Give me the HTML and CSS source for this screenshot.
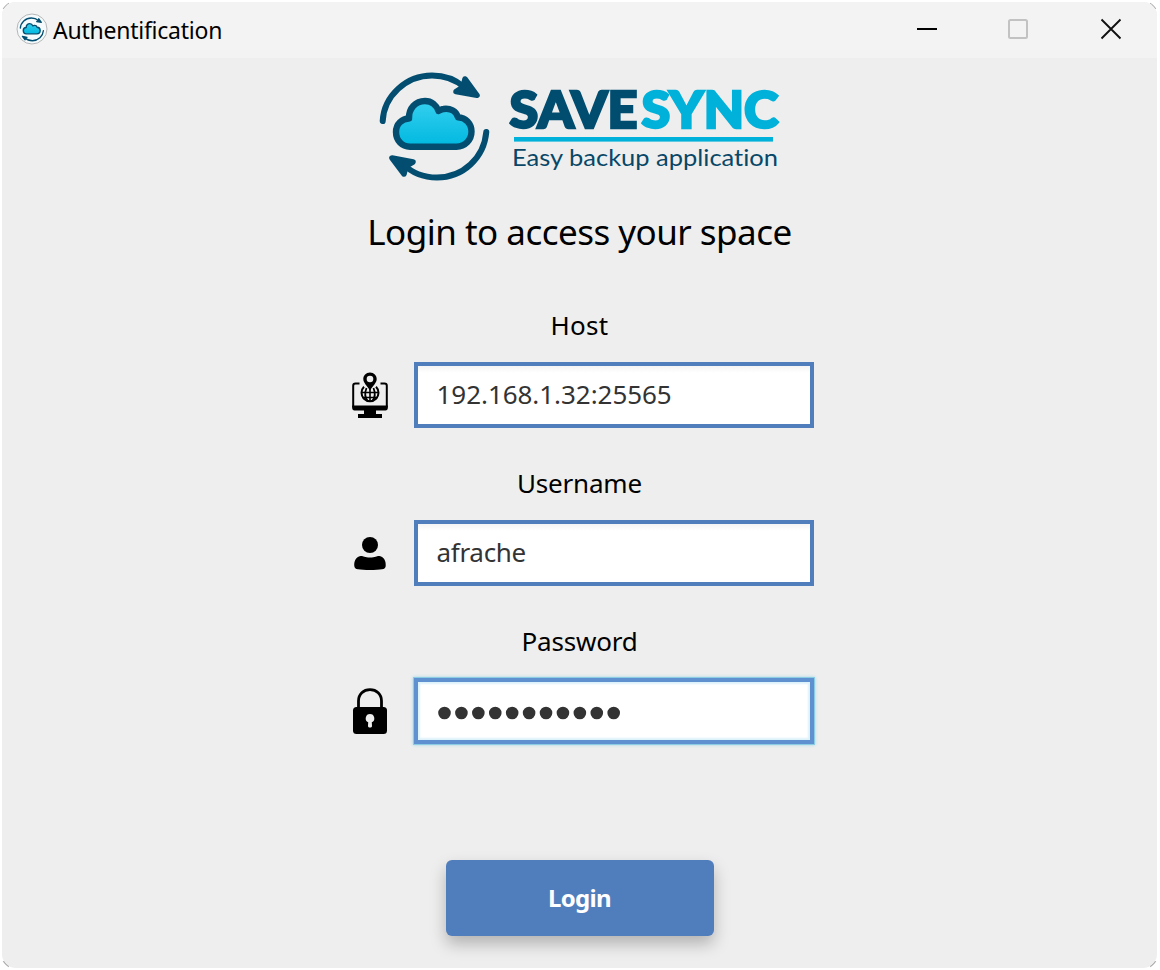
FILE: index.html
```html
<!DOCTYPE html>
<html lang="en">
<head>
<meta charset="utf-8">
<title>Authentification</title>
<link rel="stylesheet" href="styles.css">
</head>
<body>
<svg class="defs" width="0" height="0" aria-hidden="true">
  <defs>
    <linearGradient id="sky" x1="0" y1="0" x2="0" y2="1"><stop offset="0" stop-color="#35cfee"/><stop offset="1" stop-color="#00b8e0"/></linearGradient>
    <symbol id="mark" viewBox="0 0 130 130">
      <g fill="none" stroke="#034e70" stroke-linecap="round" stroke-linejoin="round">
        <path stroke-width="6" d="M12.700 61C14 36 36 15.500 62 15.500C75 15.500 86 20 94 27"/>
        <path stroke-width="6" d="M116.300 72C114 98 93 117.500 67 117.500C54 117.500 42 113 33 104"/>
        <path fill="#034e70" stroke-width="5.500" d="M95 19L107 35.300L86 31.500L93 27Z"/>
        <path fill="#034e70" stroke-width="5.500" d="M22 98L43 102L36 106L34 114Z"/>
        <path fill="url(#sky)" stroke-width="6.400" d="M40 86.700H86.500C95 86.700 101.500 80 101.500 71.500C101.500 63.500 95.500 57.500 88 57.300C86 51 80 48 73.500 49C71 49.300 70 50.500 68.500 51C66.500 45 61.500 41 55 41C45.500 41 38.500 48.500 39 58.500C32 58.500 26 64 26 72C26 80.500 32 86.700 40 86.700Z"/>
      </g>
    </symbol>
  </defs>
</svg>
<div class="window">
  <header class="titlebar">
    <svg class="app-icon" viewBox="0 0 32 32"><circle cx="16" cy="16" r="15" fill="#f5fbfd" stroke="#b5b5b5"/><use href="#mark" x="1.500" y="1.500" width="29" height="29"/></svg>
    <span class="title">Authentification</span>
    <div class="controls">
      <svg viewBox="0 0 22 22"><path d="M1 11H21" stroke="#000" stroke-width="2"/></svg>
      <svg viewBox="0 0 22 22"><rect x="1" y="2" width="18" height="18" rx="1.500" fill="none" stroke="#c2c2c2" stroke-width="2"/></svg>
      <svg viewBox="0 0 22 22"><path d="M1.500 1.500L20.500 20.500M20.500 1.500L1.500 20.500" stroke="#111" stroke-width="1.900"/></svg>
    </div>
  </header>
  <main class="content">
    <svg class="logo" viewBox="370 60 420 130">
      <use href="#mark" x="370" y="60" width="130" height="130"/>
      <text class="brand brand-dark" x="509.500" y="128.200" textLength="128" lengthAdjust="spacingAndGlyphs">SAVE</text>
      <text class="brand brand-light" x="641.500" y="128.200" textLength="137" lengthAdjust="spacingAndGlyphs">SYNC</text>
      <rect x="514" y="137" width="259" height="4.600" fill="#00b1da"/>
      <text class="tagline" x="512" y="166" textLength="266" lengthAdjust="spacingAndGlyphs">Easy backup application</text>
    </svg>
    <h1>Login to access your space</h1>
    <form class="form">
      <div class="field">
        <label class="host">Host</label>
        <div class="row">
          <svg class="icon" viewBox="0 0 40 50">
            <path d="M9.500 12.500H5.500C4 12.500 3.200 13.300 3.200 14.800V36.500M30.500 12.500H34.500C36 12.500 36.800 13.300 36.800 14.800V36.500" fill="none" stroke="#000" stroke-width="2"/>
            <path d="M2.200 34.500H37.800V37C37.800 38.500 37 39.500 35.500 39.500H26V43H32V47H8V43H14V39.500H4.500C3 39.500 2.200 38.500 2.200 37Z"/>
            <g fill="none" stroke="#000" stroke-width="2"><path d="M14 15.800A8.500 8.500 0 1 0 26 15.800"/><path d="M16.500 17C14.500 22 15 27 18 30.500M23.500 17C25.500 22 25 27 22 30.500" stroke-width="1.800"/><path d="M20 18V31M11 21.500H29M12 26.500H28" stroke-width="1.600"/></g>
            <path d="M20 1.500C16 1.500 13.300 4.500 13.300 8C13.300 12 17 14.500 20 19.500C23 14.500 26.700 12 26.700 8C26.700 4.500 24 1.500 20 1.500Z"/>
            <circle cx="20" cy="8" r="3.300" fill="#eee"/>
          </svg>
          <input class="input" type="text" value="192.168.1.32:25565">
        </div>
      </div>
      <div class="field">
        <label>Username</label>
        <div class="row">
          <svg class="icon" viewBox="0 0 40 50"><circle cx="20" cy="16" r="8"/><path d="M4.300 37C3.800 32 6 28 10.500 27C13 26.500 14 28.500 20 28.500C26 28.500 27 26.500 29.500 27C34 28 36.200 32 35.700 37C35.500 39 34.500 40 32 40.300C27 41.200 13 41.200 8 40.300C5.500 40 4.500 39 4.300 37Z"/></svg>
          <input class="input name" type="text" value="afrache">
        </div>
      </div>
      <div class="field">
        <label>Password</label>
        <div class="row">
          <svg class="icon" viewBox="0 0 40 50"><path d="M8.500 24V14C8.500 7 13.500 2.700 20 2.700S31.500 7 31.500 14V24" fill="none" stroke="#000" stroke-width="2.800"/><rect x="3" y="20" width="34" height="27" rx="3.500"/><path fill="#eee" d="M20 27A4.300 4.300 0 0 0 18.200 35.200L18 39C18 41 22 41 22 39L21.800 35.200A4.300 4.300 0 0 0 20 27Z"/></svg>
          <div class="input focused"><svg width="186" height="14" viewBox="0 0 186 14"><path d="M7.500 7H177.500" stroke="#333" stroke-width="12.600" stroke-linecap="round" stroke-dasharray="0 16.920"/></svg></div>
        </div>
      </div>
      <button class="login" type="button">Login</button>
    </form>
  </main>
</div>
</body>
</html>
```
FILE: styles.css
```css
* { box-sizing: border-box; }
body {
  margin: 0; padding: 2px 3px 2px 2px; height: 970px; overflow: hidden;
  font-family: "Noto Sans", "Open Sans", sans-serif; color: #000;
  background:
    radial-gradient(circle at 16px 16px, #888 14px, #fff 15.500px) 0 0 / 9px 9px no-repeat,
    radial-gradient(circle at -7px 16px, #888 14px, #fff 15.500px) 1150px 0 / 10px 9px no-repeat,
    radial-gradient(circle at 16px -7px, #888 14px, #fff 15.500px) 0 961px / 9px 9px no-repeat,
    radial-gradient(circle at -7px -7px, #888 14px, #fff 15.500px) 1150px 961px / 10px 9px no-repeat,
    #fff;
}
.defs { position: absolute; }
.window { height: 966px; background: #eee; border-radius: 14px; overflow: hidden; }
.titlebar { height: 56px; background: #f3f3f3; display: flex; align-items: center; padding: 0 35px 2px 14px; }
.app-icon { width: 32px; height: 32px; }
.title { font-size: 23px; line-height: 34px; margin-left: 5px; padding-top: 2px; letter-spacing: -0.24px; }
.controls { margin-left: auto; display: flex; gap: 70px; }
.controls svg { width: 22px; height: 22px; }
.content { display: flex; flex-direction: column; align-items: center; padding-top: 2px; }
.logo { width: 420px; height: 130px; display: block; }
.brand { font: 900 51px Lato, sans-serif; stroke-width: 2.500px; }
.brand-dark { fill: #004d70; stroke: #004d70; }
.brand-light { fill: #00b1da; stroke: #00b1da; }
.tagline { font: 400 23.500px Lato, sans-serif; font-variant-ligatures: none; fill: #084767; }
h1 { margin: 17px 0 0; font-size: 35px; line-height: 50px; font-weight: 400; white-space: nowrap; letter-spacing: -0.52px; }
.form { display: flex; flex-direction: column; align-items: center; padding-top: 50px; }
.field { height: 158px; display: flex; flex-direction: column; align-items: center; }
label { font-size: 26px; line-height: 36px; letter-spacing: -0.2px; }
.host { letter-spacing: 0.3px; }
.row { display: flex; align-items: center; gap: 24px; margin-top: 19px; padding-left: 4px; }
.icon { width: 40px; height: 50px; margin-top: 2px; }
.input { width: 400px; height: 66px; border: 4px solid #507ebd; border-radius: 0; background: linear-gradient(#f4f4f4, #fff 7px); font: 400 26px "Noto Sans", sans-serif; letter-spacing: -0.05px; color: #333; padding: 0 19px 2px; outline: none; }
.name { letter-spacing: -0.3px; }
.focused { display: flex; align-items: center; border-color: #5f90cf; background: #fff; box-shadow: 0 0 0 1px #8bcde3, 0 0 3px 1px #9ed7e8, inset 0 0 2px 2px #ddf2fa; padding: 4px 19px 0; }
.login { margin-top: 79px; width: 268px; height: 76px; border: 0; border-radius: 6px; background: #507ebd; color: #fff; font: 700 24px "Noto Sans", sans-serif; letter-spacing: -0.7px; padding-bottom: 3px; box-shadow: 0 8px 16px rgba(0,0,0,.25); }
```
